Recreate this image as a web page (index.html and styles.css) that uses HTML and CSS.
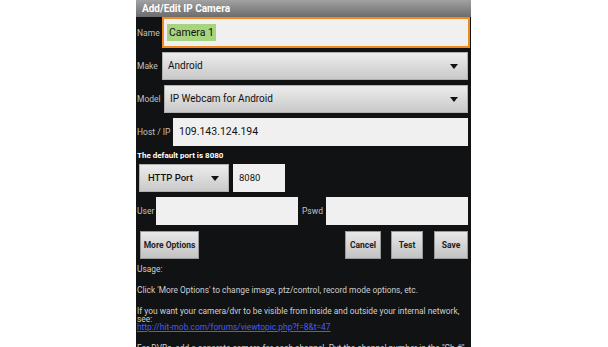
FILE: index.html
```html
<!DOCTYPE html>
<html lang="en">
<head>
    <meta charset="UTF-8">
    <meta name="viewport" content="width=device-width, initial-scale=1.0">
    <title>Add/Edit IP Camera</title>
    <link rel="stylesheet" href="styles.css">
</head>
<body>
    <div class="dialog">
        <div class="titlebar">Add/Edit IP Camera</div>

        <div class="row row-name">
            <label class="label" for="name">Name</label>
            <div class="field field-focus" id="name"><span class="selected">Camera 1</span></div>
        </div>

        <div class="row row-make">
            <span class="label">Make</span>
            <div class="spinner">Android<span class="arrow"></span></div>
        </div>

        <div class="row row-model">
            <span class="label">Model</span>
            <div class="spinner">IP Webcam for Android<span class="arrow"></span></div>
        </div>

        <div class="row row-host">
            <span class="label">Host / IP</span>
            <div class="field">109.143.124.194</div>
        </div>

        <div class="note">The default port is 8080</div>

        <div class="row row-port">
            <div class="spinner spinner-port">HTTP Port<span class="arrow"></span></div>
            <div class="field field-port">8080</div>
        </div>

        <div class="row row-user">
            <span class="label">User</span>
            <div class="field"></div>
            <span class="label label-pswd">Pswd</span>
            <div class="field"></div>
        </div>

        <div class="row row-buttons">
            <button class="btn btn-more">More Options</button>
            <span class="spacer"></span>
            <button class="btn btn-cancel">Cancel</button>
            <button class="btn btn-test">Test</button>
            <button class="btn btn-save">Save</button>
        </div>

        <div class="usage">
            <p>Usage:</p>
            <p>Click 'More Options' to change image, ptz/control, record mode options, etc.</p>
            <p>If you want your camera/dvr to be visible from inside and outside your internal network,<br>
            see:<br>
            <a href="#">http://hit-mob.com/forums/viewtopic.php?f=8&amp;t=47</a></p>
            <p>For DVRs, add a separate camera for each channel. Put the channel number in the "Ch #"</p>
        </div>
    </div>
</body>
</html>
```

FILE: styles.css
```css
body {
    margin: 0;
    padding: 0;
    background-color: #fff;
    font-family: Roboto, "Liberation Sans", sans-serif;
}

.dialog {
    width: 331px;
    height: 347px;
    margin-left: 136px;
    padding: 0 3px 0 1px;
    background-color: #111214;
    overflow: hidden;
}

.titlebar {
    height: 17px;
    margin: 0 -3px 0 -1px;
    padding-left: 6px;
    background: linear-gradient(#a2a2a2, #6c6c6c);
    color: #fff;
    font-size: 10px;
    font-weight: bold;
    line-height: 17px;
}

.row {
    display: flex;
    align-items: center;
}

.label {
    color: #c0c0c0;
    font-size: 8.5px;
    flex: none;
}

.field {
    flex: 1;
    height: 28px;
    box-sizing: border-box;
    padding-left: 6px;
    background-color: #f0f0f0;
    color: #111;
    font-size: 10.5px;
    line-height: 28px;
}

.field-focus {
    height: 31px;
    margin-right: -2px;
    padding-left: 3px;
    border: 2px solid #f08a1c;
    line-height: 27px;
}

.selected {
    padding: 2px 2px;
    background-color: #a6d47f;
}

.spinner {
    flex: 1;
    position: relative;
    height: 28px;
    box-sizing: border-box;
    padding-left: 5px;
    border: 1px solid #b0b0b0;
    background: linear-gradient(#ececec, #c9c9c9);
    color: #111;
    font-size: 10px;
    line-height: 26px;
}

.arrow {
    position: absolute;
    right: 9px;
    top: 11px;
    border-left: 4px solid transparent;
    border-right: 4px solid transparent;
    border-top: 5px solid #111;
}

.row-name .label {
    width: 25px;
}

.row-make {
    margin-top: 4px;
}

.row-make .label {
    width: 25px;
}

.row-model {
    margin-top: 5px;
}

.row-model .label {
    width: 27px;
}

.row-host {
    margin-top: 5px;
}

.row-host .label {
    width: 36px;
}

.note {
    margin-top: 4px;
    color: #fff;
    font-size: 8px;
    font-weight: bold;
    line-height: 12px;
}

.row-port {
    margin-top: 2px;
    padding-left: 2px;
    gap: 4px;
}

.spinner-port {
    flex: none;
    width: 90px;
    padding-left: 8px;
    font-size: 9.5px;
    font-weight: 500;
}

.field-port {
    flex: none;
    width: 52px;
    font-size: 9.5px;
}

.row-user {
    margin-top: 5px;
}

.row-user .label {
    width: 19px;
}

.row-user .label-pswd {
    width: 24px;
    padding-left: 4px;
}

.row-buttons {
    margin-top: 6px;
    padding-left: 3px;
}

.spacer {
    flex: 1;
}

.btn {
    height: 28px;
    padding: 0;
    border: 1px solid #9a9a9a;
    background: linear-gradient(#e8e8e8, #c2c2c2);
    color: #222;
    font-family: Roboto, "Liberation Sans", sans-serif;
    font-size: 8.5px;
    font-weight: bold;
}

.btn-more {
    width: 59px;
}

.btn-cancel {
    width: 36px;
}

.btn-test {
    width: 32px;
    margin-left: 10px;
}

.btn-save {
    width: 34px;
    margin-left: 11px;
}

.usage {
    margin-top: 6px;
    color: #cfcfcf;
    font-size: 8.4px;
    line-height: 8px;
    white-space: nowrap;
}

.usage p {
    margin: 0 0 13px;
}

.usage a {
    color: #4a5cf0;
}
```
